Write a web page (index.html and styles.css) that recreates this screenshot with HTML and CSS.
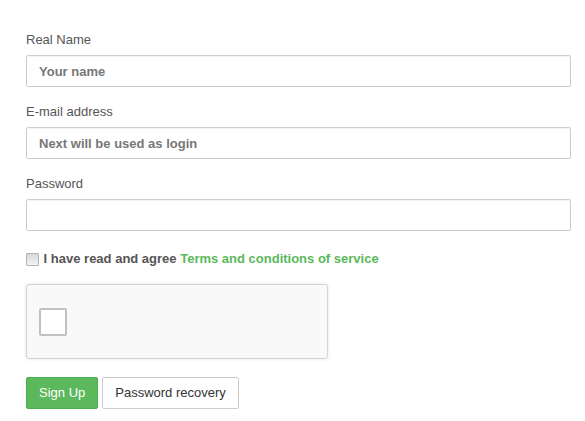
FILE: index.html
```html
<!DOCTYPE html>
<html lang="en">
<head>
<meta charset="utf-8">
<title>Sign Up</title>
<link rel="stylesheet" href="styles.css">
</head>
<body>
<form class="signup">
  <div class="group">
    <label class="label" for="name">Real Name</label>
    <input class="field" id="name" type="text" placeholder="Your name">
  </div>
  <div class="group">
    <label class="label" for="email">E-mail address</label>
    <input class="field" id="email" type="text" placeholder="Next will be used as login">
  </div>
  <div class="group">
    <label class="label" for="pass">Password</label>
    <input class="field" id="pass" type="password">
  </div>
  <label class="agree"><input class="check" type="checkbox"> I have read and agree <a class="link" href="#">Terms and conditions of service</a></label>
  <div class="captcha">
    <span class="captcha-box"></span>
  </div>
  <div class="actions">
    <button class="btn btn-primary" type="button">Sign Up</button>
    <button class="btn btn-default" type="button">Password recovery</button>
  </div>
</form>
</body>
</html>
```
FILE: styles.css
```css
html, body {
  margin: 0;
  background: #ffffff;
}
body {
  font-family: "Liberation Sans", Arial, sans-serif;
  font-size: 13px;
  color: #555555;
}
.signup {
  padding: 30px 14px 0 26px;
}
.group {
  margin-bottom: 15px;
}
.label {
  display: block;
  line-height: 20px;
  margin-bottom: 5px;
  color: #555555;
}
.field {
  display: block;
  box-sizing: border-box;
  width: 100%;
  height: 32px;
  margin: 0;
  padding: 0 12px;
  border: 1px solid #cccccc;
  border-radius: 2px;
  background: #ffffff;
  box-shadow: inset 0 1px 1px rgba(0, 0, 0, 0.05);
  font-family: inherit;
  font-size: 13px;
  font-weight: bold;
  color: #555555;
  outline: none;
}
.field::placeholder {
  color: #777777;
  font-weight: bold;
  opacity: 1;
}
.agree {
  display: flex;
  align-items: center;
  padding-top: 4px;
  line-height: 18px;
  font-weight: bold;
  color: #555555;
  white-space: pre;
}
.check {
  appearance: none;
  -webkit-appearance: none;
  box-sizing: border-box;
  width: 13px;
  height: 13px;
  margin: 0 1px 0 0;
  border: 1px solid #b4b4b4;
  border-radius: 1px;
  background: linear-gradient(#d8d8d8, #f4f4f4);
}
.link {
  color: #5cb85c;
  text-decoration: none;
}
.captcha {
  box-sizing: border-box;
  display: flex;
  align-items: center;
  width: 302px;
  height: 75px;
  margin-top: 16px;
  padding-left: 12px;
  border: 1px solid #d3d3d3;
  border-radius: 3px;
  background: #f9f9f9;
  box-shadow: 0 0 3px 1px rgba(0, 0, 0, 0.06);
}
.captcha-box {
  box-sizing: border-box;
  width: 28px;
  height: 28px;
  border: 2px solid #c1c1c1;
  border-radius: 2px;
  background: #ffffff;
}
.actions {
  display: flex;
  gap: 4px;
  margin-top: 18px;
}
.btn {
  box-sizing: border-box;
  height: 32px;
  margin: 0;
  padding: 6px 12px;
  border: 1px solid transparent;
  border-radius: 2px;
  font-family: inherit;
  font-size: 13px;
  line-height: 18px;
  cursor: pointer;
}
.btn-primary {
  background: #5cb85c;
  border-color: #4cae4c;
  color: #ffffff;
}
.btn-default {
  background: #ffffff;
  border-color: #cccccc;
  color: #333333;
}
```
